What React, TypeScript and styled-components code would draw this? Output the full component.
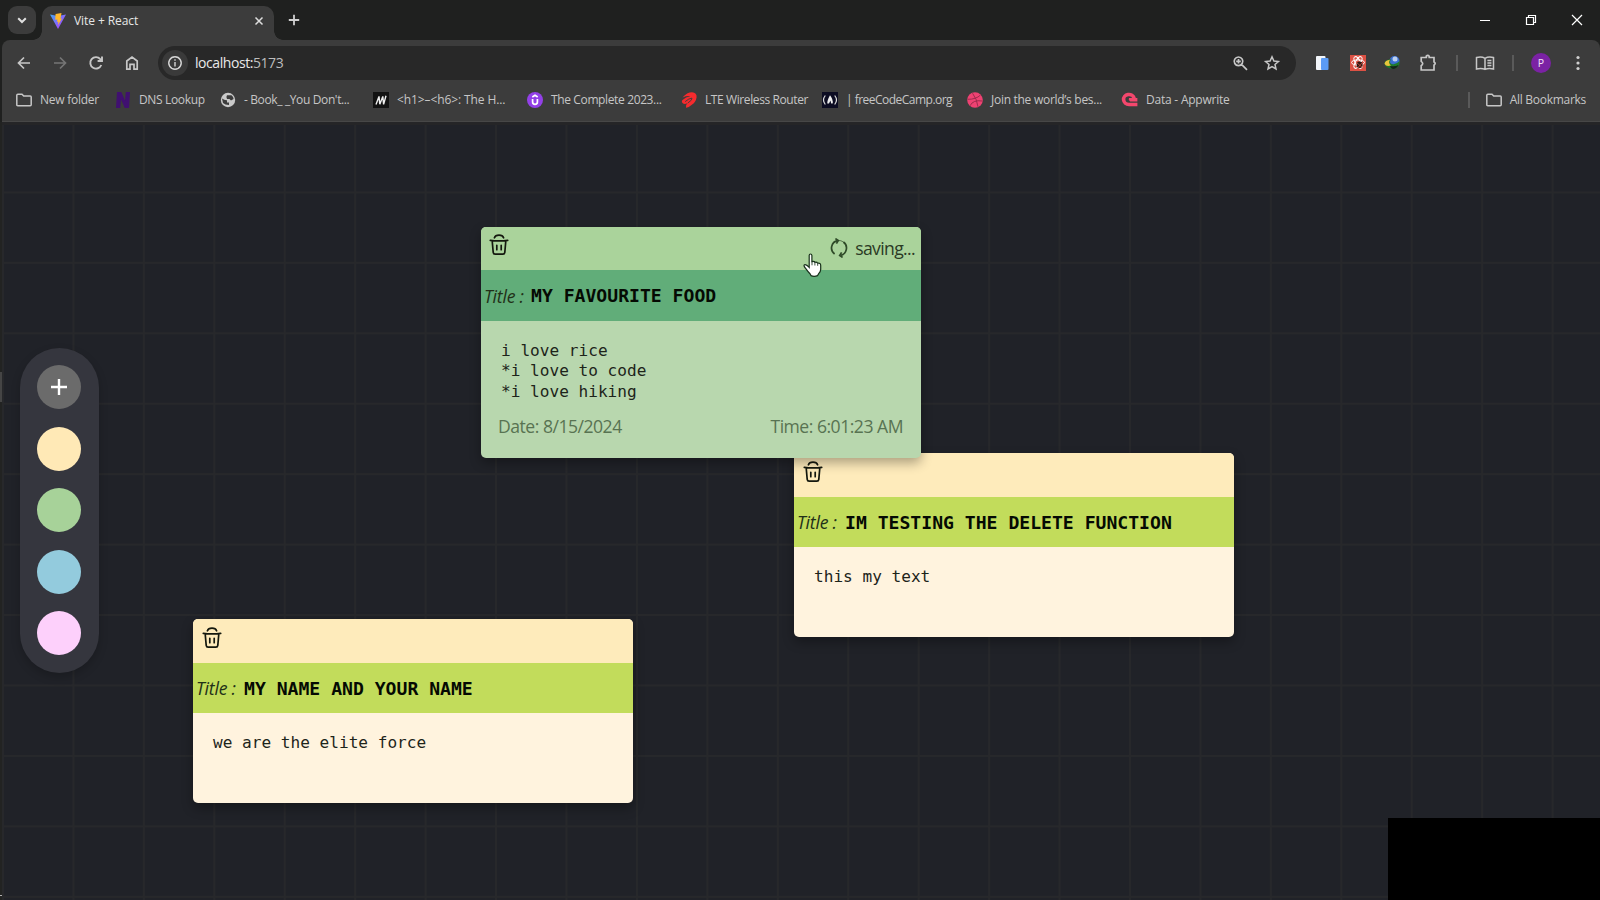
import React from "react";
import styled, { createGlobalStyle, css } from "styled-components";

const Global = createGlobalStyle`
  * { box-sizing: border-box; }
  body { margin: 0; background: #202228; overflow: hidden; }
  svg { display: block; flex: none; }
`;

const UI = `"Open Sans", "Noto Sans", sans-serif`;

const Window = styled.div`
  width: 1600px;
  height: 900px;
  display: flex;
  flex-direction: column;
  background: #1f201f;
  font-family: ${UI};
  overflow: hidden;
`;

const TabStrip = styled.div`
  height: 40px;
  display: flex;
  align-items: flex-start;
  padding: 6px 17px 0 8px;
`;

const TabSearch = styled.div`
  width: 28px;
  height: 28px;
  border-radius: 9px;
  background: #3c3c3c;
  display: grid;
  place-items: center;
`;

const Tab = styled.div`
  position: relative;
  width: 232px;
  height: 34px;
  margin-left: 6px;
  padding: 0 10px 5px 8px;
  display: flex;
  align-items: center;
  background: #3c3c3c;
  border-radius: 10px 10px 0 0;
  color: #e6e6e6;
  font-size: 12px;
  &::before, &::after {
    content: "";
    position: absolute;
    bottom: 0;
    width: 9px;
    height: 9px;
  }
  &::before { left: -9px; background: radial-gradient(circle at 0 0, transparent 8.5px, #3c3c3c 9px); }
  &::after { right: -9px; background: radial-gradient(circle at 100% 0, transparent 8.5px, #3c3c3c 9px); }
`;

const TabTitle = styled.span`
  margin-left: 8px;
  flex: 1;
  white-space: nowrap;
  letter-spacing: -0.08px;
`;

const NewTab = styled.div`
  margin: 8px 0 0 14px;
`;

const WindowButtons = styled.div`
  margin: 8px 0 0 auto;
  display: flex;
  gap: 34px;
`;

const Toolbar = styled.div`
  height: 82px;
  margin-left: 2px;
  background: #3c3c3c;
  border-radius: 8px 8px 0 0;
  border-bottom: 1px solid #474747;
`;

const NavRow = styled.div`
  height: 46px;
  display: flex;
  align-items: center;
  padding: 0 12px 0 12px;
`;

const NavIcons = styled.div`
  display: flex;
  gap: 16px;
  width: 144px;
`;

const AddressBar = styled.div`
  width: 1138px;
  height: 34px;
  border-radius: 17px;
  background: #282828;
  display: flex;
  align-items: center;
  padding: 0 14px 0 4px;
`;

const SiteInfo = styled.div`
  width: 26px;
  height: 26px;
  border-radius: 50%;
  background: #3a3a3a;
  display: grid;
  place-items: center;
`;

const Url = styled.div`
  margin: -1px 0 0 7px;
  font-size: 14px;
  letter-spacing: -0.44px;
  color: #e8e8e8;
  flex: 1;
  span { color: #bdbdbd; }
`;

const AddressActions = styled.div`
  display: flex;
  gap: 12px;
`;

const Extensions = styled.div`
  margin-left: 17px;
  display: flex;
  align-items: center;
  flex: 1;
  justify-content: space-between;
`;

const Separator = styled.i`
  width: 2px;
  height: 16px;
  background: #5a5a5a;
`;

const Avatar = styled.div`
  width: 20px;
  height: 20px;
  border-radius: 50%;
  background: #7b22a4;
  color: #f2e4f8;
  font-size: 10.5px;
  line-height: 20px;
  text-align: center;
`;

const BookmarkRow = styled.div`
  height: 28px;
  display: flex;
  align-items: center;
  padding: 0 14px;
  color: #c6c6c6;
  font-size: 12px;
  span { margin-top: -1px; }
`;

const Bookmark = styled.div<{ $w: number; $ls: number }>`
  width: ${(p) => p.$w}px;
  letter-spacing: ${(p) => p.$ls}px;
  display: flex;
  align-items: center;
  gap: 8px;
  white-space: nowrap;
`;

const AllBookmarks = styled.div`
  margin-left: auto;
  display: flex;
  align-items: center;
  gap: 8px;
  letter-spacing: -0.28px;
  ${Separator} { margin-right: 8px; }
`;

const Board = styled.main`
  position: relative;
  flex: 1;
  background-color: #202228;
  background-image:
    linear-gradient(to right, #27282b 2px, transparent 2px),
    linear-gradient(to bottom, #27282b 2px, transparent 2px);
  background-size: 70.45px 70.45px;
  background-position: 2px -1px;
  box-shadow: inset 2px 0 #222322, inset 0 3px #252527;
`;

const EdgeMark = styled.i<{ $y: number; $h: number; $c: string }>`
  position: absolute;
  left: 0;
  top: ${(p) => p.$y}px;
  width: 2px;
  height: ${(p) => p.$h}px;
  background: ${(p) => p.$c};
`;

const Palette = styled.aside`
  position: absolute;
  left: 20px;
  top: 226px;
  width: 79px;
  height: 325px;
  border-radius: 40px;
  background: #35363e;
  display: flex;
  flex-direction: column;
  align-items: flex-start;
  padding: 17px 0 0 17px;
  gap: 17.5px;
  box-shadow: 0 4px 10px rgba(0, 0, 0, 0.2);
`;

const Swatch = styled.div<{ $c: string }>`
  width: 44px;
  height: 44px;
  border-radius: 50%;
  background: ${(p) => p.$c};
  display: grid;
  place-items: center;
`;

type Theme = { header: string; title: string; body: string };
const green: Theme = { header: "#aad39b", title: "#61ad79", body: "#b8d7ae" };
const yellow: Theme = { header: "#feebbb", title: "#c2dc5b", body: "#fff3de" };

const Note = styled.article<{ $x: number; $y: number; $h: number; $t: Theme; $lift?: boolean }>`
  position: absolute;
  left: ${(p) => p.$x}px;
  top: ${(p) => p.$y}px;
  width: 440px;
  height: ${(p) => p.$h}px;
  border-radius: 5px;
  overflow: hidden;
  background: ${(p) => p.$t.body};
  box-shadow: 0 5px 12px rgba(0, 0, 0, 0.32);
  color: #1d241a;
  ${(p) => p.$lift && css`z-index: 2;`}
`;

const NoteHeader = styled.header<{ $t: Theme; $h: number; $lift?: boolean }>`
  height: ${(p) => p.$h}px;
  background: ${(p) => p.$t.header};
  display: flex;
  justify-content: space-between;
  padding: ${(p) => (p.$lift ? "7px 6px 0 8px" : "8px 6px 0 9px")};
`;

const Saving = styled.div`
  display: flex;
  height: 28px;
  align-items: center;
  gap: 7px;
  font: 17.6px ${UI};
  letter-spacing: -0.65px;
  color: #2a3a25;
`;

const NoteTitle = styled.div<{ $t: Theme; $h: number }>`
  height: ${(p) => p.$h}px;
  background: ${(p) => p.$t.title};
  display: flex;
  align-items: center;
  padding-left: 3px;
`;

const TitleLabel = styled.em<{ $w: number }>`
  width: ${(p) => p.$w}px;
  font: italic 17.6px ${UI};
  letter-spacing: -0.2px;
  color: #213018;
  white-space: nowrap;
`;

const TitleText = styled.b`
  font: bold 18.1px "DejaVu Sans Mono", monospace;
  color: #050a03;
  white-space: pre;
`;

const NoteBody = styled.div`
  padding: 20px 20px 0;
  font: 16.1px/20.3px "DejaVu Sans Mono", monospace;
  white-space: pre;
`;

const NoteFooter = styled.footer`
  display: flex;
  justify-content: space-between;
  padding: 12px 18px 0 17px;
  font: 17.6px/24px ${UI};
  letter-spacing: -0.5px;
  color: #587352;
`;

const Cursor = styled.div`
  position: absolute;
  left: 803px;
  top: 131px;
  z-index: 3;
`;

const Overlay = styled.div`
  position: absolute;
  right: 0;
  bottom: 0;
  width: 212px;
  height: 82px;
  background: #000;
`;

type P = { d: string; s?: number; w?: number; c?: string; fill?: string; vb?: number };
const Ico = ({ d, s = 20, w = 1.7, c = "#c7c7c7", fill = "none", vb = 20 }: P) => (
  <svg width={s} height={s} viewBox={`0 0 ${vb} ${vb}`} fill={fill} stroke={c} strokeWidth={w}>
    <path d={d} />
  </svg>
);

const ViteLogo = () => (
  <svg width="16" height="16" viewBox="0 0 16 16">
    <defs>
      <linearGradient id="v" x1="0" y1="0" x2="1" y2="1">
        <stop offset="0" stopColor="#41a5f5" />
        <stop offset="1" stopColor="#bd34fe" />
      </linearGradient>
    </defs>
    <path d="M0 1.5 L8 16 L16 1.5 L8 3Z" fill="url(#v)" />
    <path d="M11.5 0 L5.6 1 L5.2 6.8 L7.4 6.4 L7 9 L8.4 8.6 L8 12 L12 5.4 L10.5 5.7Z" fill="#ffb82b" />
  </svg>
);

const Folder = () => <Ico s={16} vb={16} w={1.5} d="M.8 3.2Q.8 2.2 1.8 2.2H6L7.7 4H14.2Q15.2 4 15.2 5V12.8Q15.2 13.8 14.2 13.8H1.8Q.8 13.8 .8 12.8Z" />;

const Netify = () => (
  <svg width="16" height="16" viewBox="0 0 16 16"><path d="M1 16L2 0H6.3L10 8.5L10.8 0H15L14 16H9.8L6 7.5L5.2 16Z" fill="#401070" /></svg>
);
const Globe = () => (
  <svg width="16" height="16" viewBox="0 0 16 16">
    <circle cx="8" cy="8" r="7.2" fill="#c9c9c9" />
    <path d="M2 6.5Q4.5 8.5 7 8.3V10.5H9V13Q5 13 3 11ZM7 3.2H11.5Q13.5 5 13.6 7L11 8.5L9.5 7H7Q5.8 5 7 3.2Z" fill="#3c3c3c" />
  </svg>
);
const Mdn = () => (
  <svg width="16" height="16" viewBox="0 0 16 16">
    <rect width="16" height="16" fill="#121212" />
    <path d="M3 12.4L6 4.4L6.8 12.2L9.8 4.4L10.6 12.4L13 3.8" fill="none" stroke="#eee" strokeWidth="1.4" />
  </svg>
);
const Udemy = () => (
  <svg width="16" height="16" viewBox="0 0 16 16">
    <circle cx="8" cy="8" r="8" fill="#9340e8" />
    <path d="M5.6 7V10Q5.6 12.3 8 12.3T10.4 10V7M5.3 4.9L8 3.3L10.7 4.9" fill="none" stroke="#fff" strokeWidth="1.7" />
  </svg>
);
const Airtel = () => (
  <svg width="16" height="16" viewBox="0 0 16 16">
    <path d="M1.5 5.5Q6 .2 11 .2Q16 .8 15.6 5.2Q15 10 10.5 13Q7 16 5 15.8Q4 13.5 6.5 11Q4 12.5 2 11.5Q0 10 1.2 8.2Q5 4.8 9.3 4.2Q6 3.8 1.5 5.5Z" fill="#f52b2e" />
    <path d="M4.2 9.6Q8 6.3 11 6.1Q11.5 8 6.8 11" fill="none" stroke="#3c3c3c" strokeWidth=".9" />
  </svg>
);
const Fcc = () => (
  <svg width="16" height="16" viewBox="0 0 16 16">
    <rect width="16" height="16" fill="#0c0c22" />
    <path d="M3.3 3.5Q-.3 8 3.3 12.5M12.7 3.5Q16.3 8 12.7 12.5" fill="none" stroke="#ddd" strokeWidth="1.2" />
    <path d="M8 3.2Q11.5 7.5 10.6 11.5H9.2L8.4 8.5L7 11.5H5.3Q5 8.5 8 3.2Z" fill="#eee" />
  </svg>
);
const Dribbble = () => (
  <svg width="16" height="16" viewBox="0 0 16 16">
    <circle cx="8" cy="8" r="7.8" fill="#ee4272" />
    <path d="M5.5 1.2Q10 7 11 14.8M.6 7.3Q9 7.5 13.5 3M3 13.8Q6 7.5 15.4 9" fill="none" stroke="#9e2b4d" strokeWidth="1" />
  </svg>
);
const Appwrite = () => (
  <svg width="17" height="16" viewBox="0 0 17 16">
    <path d="M16.4 12.5H8A5.4 5 0 1 1 13.2 6.2" fill="none" stroke="#f4476d" strokeWidth="3.6" />
    <path d="M8 6H16.4V9.4H9.2Q6.9 8 8 6Z" fill="#f4476d" />
  </svg>
);

const Trash = () => (
  <svg width="20" height="22" viewBox="0 0 20 22" fill="none" stroke="#14180e" strokeWidth="1.7" strokeLinecap="round" strokeLinejoin="round">
    <path d="M1.3 6.3Q10 7.6 18.7 6.3M5.4 3.8Q6.3 1.2 10 1.2T14.6 3.8M3.2 7L4.2 18.4Q4.4 20.2 6.1 20.2H13.9Q15.6 20.2 15.8 18.4L16.8 7M7.8 11.3V15.7M12.2 11.3V15.7" />
  </svg>
);

const Refresh = () => (
  <svg width="18" height="20" viewBox="0 0 18 20" fill="none" stroke="#2f4a28" strokeWidth="1.7">
    <path d="M4.6 16A7.5 7.5 0 0 1 7.6 2.6M13.4 4A7.5 7.5 0 0 1 10.4 17.4" />
    <path d="M5.4 .6L8.3 2.6L6.4 5.6M12.6 19.4L9.7 17.4L11.6 14.4" />
    <path d="M8 2.5Q11 2.2 13.4 4" strokeWidth="1" opacity=".7" />
  </svg>
);

const Hand = () => (
  <svg width="20" height="25" viewBox="0 0 20 25">
    <path d="M6.2 2.5Q6.2 1 7.5 1T8.9 2.5V8.6Q11.4 8 11.9 9.3Q14 8.8 14.6 10.2Q17.7 9.7 17.7 12.4V16.5Q17.7 18.5 15.7 20.7L14.6 22.6Q11 24 8 22.6L7.2 21Q5 18.8 2.6 15.4Q.2 12.4 1.5 11.7Q3.3 11 6.2 14.4Z" fill="#fff" stroke="#17301a" strokeWidth="1.2" />
    <path d="M9 8.6V12.3M11.9 9.3V12.5M14.7 10.4V12.8" stroke="#26402a" strokeWidth=".9" />
  </svg>
);

const bookmarks: [React.ReactNode, string, number, number][] = [
  [<Folder />, "New folder", 99, -0.26],
  [<Netify />, "DNS Lookup", 105, -0.35],
  [<Globe />, "- Book_ _You Don't...", 153, -0.37],
  [<Mdn />, "<h1>–<h6>: The H...", 154, -0.1],
  [<Udemy />, "The Complete 2023...", 154, -0.37],
  [<Airtel />, "LTE Wireless Router", 141, -0.4],
  [<Fcc />, "| freeCodeCamp.org", 145, -0.52],
  [<Dribbble />, "Join the world’s bes...", 154, -0.28],
  [<Appwrite />, "Data - Appwrite", 130, -0.22],
];

const notes = [
  { x: 794, y: 331, h: 184, t: yellow, head: 44, bar: 50, label: 48, title: "IM TESTING THE DELETE FUNCTION", text: "this my text" },
  { x: 193, y: 497, h: 184, t: yellow, head: 44, bar: 50, label: 48, title: "MY NAME AND YOUR NAME", text: "we are the elite force" },
  { x: 481, y: 105, h: 231, t: green, head: 43, bar: 51, label: 47, title: "MY FAVOURITE FOOD", text: "i love rice\n*i love to code\n*i love hiking", active: true },
];

export default function App() {
  return (
    <Window>
      <Global />
      <TabStrip>
        <TabSearch><Ico s={12} vb={12} w={2} c="#e0e0e0" d="M2.2 4.2L6 8L9.8 4.2" /></TabSearch>
        <Tab>
          <ViteLogo />
          <TabTitle>Vite + React</TabTitle>
          <Ico s={10} vb={10} w={1.5} c="#dedede" d="M1.5 1.5L8.5 8.5M8.5 1.5L1.5 8.5" />
        </Tab>
        <NewTab><Ico s={12} vb={12} w={1.8} c="#d0d0d0" d="M6 .8V11.2M.8 6H11.2" /></NewTab>
        <WindowButtons>
          <Ico s={12} vb={12} w={1} c="#fff" d="M1 6.5H11" />
          <Ico s={12} vb={12} w={1.2} c="#fff" d="M1.5 3.5H8.5V10.5H1.5ZM3.5 3V1.5H10.5V8.5H9" />
          <Ico s={12} vb={12} w={1.2} c="#fff" d="M1 1L11 11M11 1L1 11" />
        </WindowButtons>
      </TabStrip>
      <Toolbar>
        <NavRow>
          <NavIcons>
            <Ico d="M16 10H5M10 4.5L4.5 10L10 15.5" />
            <Ico c="#757575" d="M4 10H15M10 4.5L15.5 10L10 15.5" />
            <Ico w={1.9} d="M15.3 12A5.7 5.7 0 1 1 14.3 6.1L16 7.8M16 3.6V8H11.6" />
            <Ico d="M4.8 8L10 4L15.2 8V16.2H12V11.3H8V16.2H4.8Z" />
          </NavIcons>
          <AddressBar>
            <SiteInfo><Ico s={16} vb={16} w={1.4} c="#d6d6d6" d="M8 1.8A6.2 6.2 0 1 1 7.99 1.8M8 7V11.4M8 4.3V5.8" /></SiteInfo>
            <Url>localhost:<span>5173</span></Url>
            <AddressActions>
              <Ico d="M8.5 4A4.3 4.3 0 1 1 8.49 4M11.8 11.6L17 16.8M6.2 8.3H10.8M8.5 6V10.6" />
              <Ico w={1.5} d="M10 3.8L11.9 8L16.4 8.5L13 11.5L14 16L10 13.7L6 16L7 11.5L3.6 8.5L8.1 8Z" />
            </AddressActions>
          </AddressBar>
          <Extensions>
            <svg width="20" height="20" viewBox="0 0 20 20"><rect x="3" y="3" width="9.5" height="14" rx="1" fill="#f2f5fa" /><rect x="8" y="5" width="7.5" height="12" rx="1" fill="#5b9bf5" /></svg>
            <svg width="16" height="16" viewBox="0 0 16 16">
              <rect width="16" height="16" fill="#dc5144" />
              <g fill="none" stroke="#fff" strokeWidth="1"><ellipse cx="8" cy="7.5" rx="6.5" ry="2.6" /><ellipse cx="8" cy="7.5" rx="6.5" ry="2.6" transform="rotate(60 8 7.5)" /><ellipse cx="8" cy="7.5" rx="6.5" ry="2.6" transform="rotate(-60 8 7.5)" /></g>
              <ellipse cx="9.6" cy="9.8" rx="3" ry="3.3" fill="#301812" />
              <path d="M7 8L12 12M12 8L8 12.5" stroke="#dc5144" strokeWidth=".7" />
            </svg>
            <svg width="18" height="16" viewBox="0 0 18 16">
              <circle cx="11.5" cy="6" r="5" fill="#3a6fd0" /><circle cx="12" cy="4" r="2.5" fill="#bcd0f0" />
              <path d="M1.5 9Q1 5 8 4.2Q5.5 8 9 9Q13 10 16.6 6Q17 12.5 11 14Q3 13.5 1.5 9Z" fill="#1d7a2b" />
              <path d="M7 11Q12 12 15.5 10Q13.5 14 10 14Q7.5 13.6 7 11Z" fill="#14231a" />
              <path d="M1.5 8.8Q2 5.5 7 4.8Q4.8 8 8 10.5Q3 12 1.5 8.8Z" fill="#e8c43b" />
            </svg>
            <Ico s={20} d="M3.2 4.5H8.3V3.2Q9.8 1.6 11.2 3.2V4.5H16V9Q18.4 10 16 12.2V17H3.2V12.8Q6.2 10.6 3.2 8.3Z" />
            <Separator />
            <Ico s={20} w={1.5} d="M10 5.3Q6.5 3.3 1.5 4.6V16Q6.5 14.8 10 16.4Q13.5 14.8 18.5 16V4.6Q13.5 3.3 10 5.3ZM10 5.3V16.4M12.4 7.6H16.4M12.4 10.1H16.4M12.4 12.6H16.4" />
            <Separator />
            <Avatar>P</Avatar>
            <svg width="20" height="20" viewBox="0 0 20 20" fill="#d0d0d0"><circle cx="10" cy="4.5" r="1.6" /><circle cx="10" cy="10" r="1.6" /><circle cx="10" cy="15.5" r="1.6" /></svg>
          </Extensions>
        </NavRow>
        <BookmarkRow>
          {bookmarks.map(([icon, text, w, ls]) => (
            <Bookmark key={text} $w={w} $ls={ls}>{icon}<span>{text}</span></Bookmark>
          ))}
          <AllBookmarks><Separator /><Folder /><span>All Bookmarks</span></AllBookmarks>
        </BookmarkRow>
      </Toolbar>
      <Board>
        <EdgeMark $y={250} $h={30} $c="#454545" />
        <EdgeMark $y={773} $h={1} $c="#b0b0b0" />
        <Palette>
          <Swatch $c="#6b6b6b"><Ico s={16} vb={16} w={2.4} c="#fff" d="M8 0V16M0 8H16" /></Swatch>
          <Swatch $c="#ffe9b6" />
          <Swatch $c="#a7d299" />
          <Swatch $c="#93cbdd" />
          <Swatch $c="#fdd0fb" />
        </Palette>
        {notes.map((n) => (
          <Note key={n.title} $x={n.x} $y={n.y} $h={n.h} $t={n.t} $lift={n.active}>
            <NoteHeader $t={n.t} $h={n.head} $lift={n.active}>
              <Trash />
              {n.active && <Saving><Refresh /><span>saving...</span></Saving>}
            </NoteHeader>
            <NoteTitle $t={n.t} $h={n.bar}>
              <TitleLabel $w={n.label}>Title :</TitleLabel>
              <TitleText>{n.title}</TitleText>
            </NoteTitle>
            <NoteBody>{n.text}</NoteBody>
            {n.active && <NoteFooter><span>Date: 8/15/2024</span><span>Time: 6:01:23 AM</span></NoteFooter>}
          </Note>
        ))}
        <Cursor><Hand /></Cursor>
        <Overlay />
      </Board>
    </Window>
  );
}
